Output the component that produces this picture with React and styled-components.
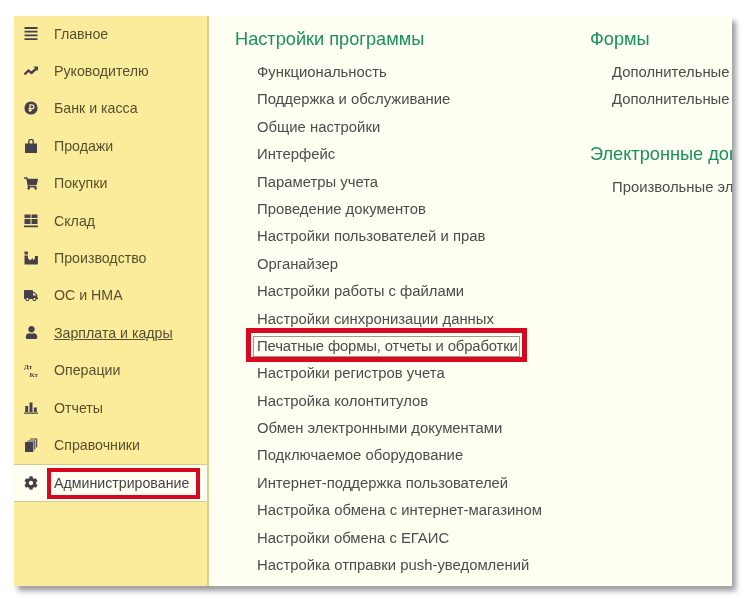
import React from "react"
import styled, { createGlobalStyle } from 'styled-components';
import { FaCog, FaShoppingCart, FaTruck, FaUser } from 'react-icons/fa';

const GlobalStyle = createGlobalStyle`
    html, body {
        margin: 0;
        background: #fff;
    }
    body {
        font-family: 'Liberation Sans', Arial, sans-serif;
    }
`;

const MenuIcon = () => (
  <svg viewBox="0 0 14 14" width="14" height="14">
    <path d="M0.5 1h13M0.5 4.7h13M0.5 8.4h13M0.5 12.2h13" stroke="currentColor" strokeWidth="1.8" />
  </svg>
)
const TrendIcon = () => (
  <svg viewBox="0 0 14 14" width="14" height="14">
    <path d="M0.5 10.5L4.5 6.5L7.5 9L13 4" fill="none" stroke="currentColor" strokeWidth="2.4" />
    <path d="M9.5 2.6h4.5v4.5z" fill="currentColor" />
  </svg>
)
const CoinIcon = () => (
  <svg viewBox="0 0 14 14" width="14" height="14">
    <circle cx="7" cy="7" r="6.6" fill="currentColor" />
    <path d="M6 11V3.8h2a1.9 1.9 0 0 1 0 3.8H4.6M4.6 9.4h3.2" fill="none" stroke="#fbec9c" strokeWidth="1.3" />
  </svg>
)
const BagIcon = () => (
  <svg viewBox="0 0 14 14" width="14" height="14">
    <path d="M1 4.5h12V14H1z" fill="currentColor" />
    <path d="M4.8 6V2.6a2.2 2.2 0 0 1 4.4 0V6" fill="none" stroke="currentColor" strokeWidth="1.4" />
  </svg>
)
const StockIcon = () => (
  <svg viewBox="0 0 14 14" width="14" height="14" fill="currentColor">
    <path d="M0.5 0.5h6v3.6h-6zM7.5 0.5h6v3.6h-6zM0.5 5h6v5h-6zM7.5 5h6v5h-6zM0 11.4h14v1.8H0z" />
  </svg>
)
const FactoryIcon = () => (
  <svg viewBox="0 0 14 14" width="14" height="14" fill="currentColor">
    <path d="M0.5 0.5h3.4v3h-3.4zM0.5 4.4h3.4V7l2 2.4 3-2.4v2.4l2-1.8V5h3v8.5H0.5z" />
  </svg>
)
const OperIcon = () => (
  <svg viewBox="0 0 14 14" width="14" height="14" fill="currentColor">
    <text x="0" y="6" fontSize="7" fontFamily="'Liberation Serif', serif" fontWeight="700">Дт</text>
    <text x="5.5" y="13.5" fontSize="7" fontFamily="'Liberation Serif', serif" fontWeight="700">Кт</text>
  </svg>
)
const BarsIcon = () => (
  <svg viewBox="0 0 14 14" width="14" height="14" fill="currentColor">
    <path d="M1.2 5h3V11H1.2zM5.5 1.5h3V11h-3zM9.8 6.5h3V11h-3zM0 11.4h14v1.4H0z" />
  </svg>
)
const BooksIcon = () => (
  <svg viewBox="0 0 14 14" width="14" height="14" fill="currentColor">
    <path d="M1 4h8.4v10H1z" />
    <path d="M3.5 2.4h7.8v9h-1.1V3.5H3.5zM6 0.4h7.2v9h-1.1V1.5H6z" />
  </svg>
)

const sections = [
  { label: 'Главное', icon: <MenuIcon /> },
  { label: 'Руководителю', icon: <TrendIcon /> },
  { label: 'Банк и касса', icon: <CoinIcon /> },
  { label: 'Продажи', icon: <BagIcon /> },
  { label: 'Покупки', icon: <FaShoppingCart size={15} /> },
  { label: 'Склад', icon: <StockIcon /> },
  { label: 'Производство', icon: <FactoryIcon /> },
  { label: 'ОС и НМА', icon: <FaTruck size={15} /> },
  { label: 'Зарплата и кадры', icon: <FaUser size={13} />, underlined: true },
  { label: 'Операции', icon: <OperIcon /> },
  { label: 'Отчеты', icon: <BarsIcon /> },
  { label: 'Справочники', icon: <BooksIcon /> },
  { label: 'Администрирование', icon: <FaCog size={14} />, active: true },
]

const settings = [
  'Функциональность',
  'Поддержка и обслуживание',
  'Общие настройки',
  'Интерфейс',
  'Параметры учета',
  'Проведение документов',
  'Настройки пользователей и прав',
  'Органайзер',
  'Настройки работы с файлами',
  'Настройки синхронизации данных',
  'Печатные формы, отчеты и обработки',
  'Настройки регистров учета',
  'Настройка колонтитулов',
  'Обмен электронными документами',
  'Подключаемое оборудование',
  'Интернет-поддержка пользователей',
  'Настройка обмена с интернет-магазином',
  'Настройки обмена с ЕГАИС',
  'Настройка отправки push-уведомлений',
]

const App = () => {
  return (
    <Page>
      <GlobalStyle />
      <Window>
        <Sidebar>
          {sections.map((s) => (
            <SectionRow key={s.label} $active={s.active}>
              <SectionIcon>{s.icon}</SectionIcon>
              <SectionLabel $underlined={s.underlined} $active={s.active}>{s.label}</SectionLabel>
            </SectionRow>
          ))}
        </Sidebar>
        <Content>
          <MainColumn>
            <Title>Настройки программы</Title>
            {settings.map((item) => (
              item.startsWith('Печатные')
                ? <FocusedItem key={item}>{item}</FocusedItem>
                : <Item key={item}>{item}</Item>
            ))}
          </MainColumn>
          <SideColumn>
            <Title>Формы</Title>
            <Item>Дополнительные реквизиты</Item>
            <Item>Дополнительные сведения</Item>
            <SecondTitle>Электронные документы</SecondTitle>
            <Item>Произвольные электронные документы</Item>
          </SideColumn>
        </Content>
      </Window>
    </Page>
  )
}

const Page = styled.div`
    width: 750px;
    height: 611px;
    padding: 16px 18px 25px 14px;
    box-sizing: border-box;
    overflow: hidden;
    background: #fff;
`;

const Window = styled.div`
    display: flex;
    height: 570px;
    background: #fffff2;
    box-shadow: 4px 5px 5px rgba(80, 80, 90, 0.55);
    filter: blur(0.45px);
`;

const Sidebar = styled.nav`
    width: 195px;
    flex-shrink: 0;
    box-sizing: border-box;
    background: #fbec9c;
    border-right: 2px solid #d8cf90;
`;

const SectionRow = styled.div`
    display: flex;
    align-items: center;
    position: relative;
    height: 37.4px;
    padding: 0 0 2px 10px;
    box-sizing: border-box;
    color: #4a4535;
    ${(p) => p.$active && `
        height: 38px;
        margin-top: -0.6px;
        padding-bottom: 0;
        background: #fffff2;
        border-top: 1px solid #d8cc8c;
        border-bottom: 1px solid #d8cc8c;
        &::after {
            content: '';
            position: absolute;
            left: 33px;
            top: 3px;
            width: 153px;
            height: 31px;
            box-sizing: border-box;
            border: 4px solid #d9071f;
        }
    `}
`;

const SectionIcon = styled.span`
    display: flex;
    align-items: center;
    justify-content: center;
    width: 14px;
    height: 14px;
    margin-right: 16px;
    color: #45404a;
`;

const SectionLabel = styled.span`
    font-size: 14.2px;
    white-space: nowrap;
    color: ${(p) => (p.$active ? '#44424a' : '#57502f')};
    text-decoration: ${(p) => (p.$underlined ? 'underline' : 'none')};
`;

const Content = styled.main`
    flex: 1;
    display: flex;
    overflow: hidden;
    padding-top: 12px;
`;

const MainColumn = styled.section`
    width: 381px;
    flex-shrink: 0;
    padding-left: 26px;
    box-sizing: border-box;
`;

const SideColumn = styled.section`
    flex: 1;
    min-width: 0;
    white-space: nowrap;
`;

const Title = styled.h2`
    margin: 0 0 9px;
    height: 22px;
    font-size: 18.2px;
    line-height: 22px;
    font-weight: 400;
    color: #17915c;
    white-space: nowrap;
`;

const SecondTitle = styled(Title)`
    margin-top: 29px;
`;

const Item = styled.div`
    height: 27.4px;
    line-height: 27.4px;
    margin-left: 22px;
    font-size: 14.85px;
    color: #4c4c4c;
    white-space: nowrap;
`;

const FocusedItem = styled(Item)`
    position: relative;
    letter-spacing: -0.14px;
    &::before {
        content: '';
        position: absolute;
        left: -4px;
        top: 3px;
        width: 267px;
        height: 21px;
        box-sizing: border-box;
        border: 1px solid #9a9a90;
    }
    &::after {
        content: '';
        position: absolute;
        left: -11px;
        top: -5px;
        width: 281px;
        height: 34px;
        box-sizing: border-box;
        border: 5px solid #d9071f;
    }
`;

export default App
